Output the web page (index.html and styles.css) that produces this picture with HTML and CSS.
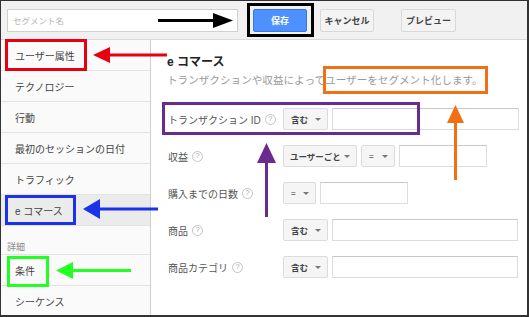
FILE: index.html
```html
<!DOCTYPE html>
<html lang="ja">
<head>
<meta charset="utf-8">
<title>セグメント</title>
<link rel="stylesheet" href="styles.css">
</head>
<body>
<div class="frame">
  <header class="topbar">
    <div class="seg-input"><span class="placeholder">セグメント名</span></div>
    <button class="btn btn-save">保存</button>
    <button class="btn btn-cancel">キャンセル</button>
    <button class="btn btn-preview">プレビュー</button>
  </header>
  <div class="main">
    <nav class="sidenav">
      <div class="nav-item">ユーザー属性</div>
      <div class="nav-item">テクノロジー</div>
      <div class="nav-item">行動</div>
      <div class="nav-item">最初のセッションの日付</div>
      <div class="nav-item">トラフィック</div>
      <div class="nav-item selected">e コマース</div>
      <div class="nav-heading">詳細</div>
      <div class="nav-item">条件</div>
      <div class="nav-item last">シーケンス</div>
    </nav>
    <section class="content">
      <h2 class="title">e コマース</h2>
      <p class="desc">トランザクションや収益によってユーザーをセグメント化します。</p>
      <div class="form">
        <div class="row">
          <div class="label">トランザクション ID <span class="help">?</span></div>
          <div class="controls">
            <div class="select w-contains"><span>含む</span><span class="caret"></span></div>
            <div class="input in-long"></div>
          </div>
        </div>
        <div class="row">
          <div class="label">収益 <span class="help">?</span></div>
          <div class="controls">
            <div class="select w-per-user"><span>ユーザーごと</span><span class="caret"></span></div>
            <div class="select w-eq"><span class="eq">=</span><span class="caret"></span></div>
            <div class="input in-short"></div>
          </div>
        </div>
        <div class="row">
          <div class="label">購入までの日数 <span class="help">?</span></div>
          <div class="controls">
            <div class="select w-eq-sm"><span class="eq">=</span><span class="caret"></span></div>
            <div class="input in-short"></div>
          </div>
        </div>
        <div class="row">
          <div class="label">商品 <span class="help">?</span></div>
          <div class="controls">
            <div class="select w-contains"><span>含む</span><span class="caret"></span></div>
            <div class="input in-long2"></div>
          </div>
        </div>
        <div class="row">
          <div class="label">商品カテゴリ <span class="help">?</span></div>
          <div class="controls">
            <div class="select w-contains"><span>含む</span><span class="caret"></span></div>
            <div class="input in-long2"></div>
          </div>
        </div>
      </div>
    </section>
  </div>
  <svg class="annotations" width="529" height="317" viewBox="0 0 529 317">
    <g fill="none" stroke-width="3">
      <rect x="6.5" y="40.5" width="79" height="29" stroke="#e60012"/>
      <rect x="248.5" y="4.5" width="64" height="31" stroke="#000"/>
      <rect x="6.5" y="196.5" width="68" height="27" stroke="#1a33e8"/>
      <rect x="8.5" y="257.5" width="39" height="28" stroke="#22ff22"/>
      <rect x="163.5" y="103.5" width="255" height="30" stroke="#6a2b8e"/>
      <rect x="324.5" y="67.5" width="162" height="25" stroke="#f07013"/>
      <line x1="158" y1="20.5" x2="215" y2="20.5" stroke="#000"/>
      <line x1="108" y1="55" x2="167" y2="55" stroke="#e60012"/>
      <line x1="98" y1="209" x2="158" y2="209" stroke="#1a33e8"/>
      <line x1="71" y1="270.5" x2="131" y2="270.5" stroke="#22ff22"/>
      <line x1="266.5" y1="160" x2="266.5" y2="217" stroke="#6a2b8e"/>
      <line x1="455.5" y1="120" x2="455.5" y2="180" stroke="#f07013"/>
    </g>
    <polygon points="213,13 233,20.5 213,28" fill="#000"/>
    <polygon points="110,47 93,55 110,63" fill="#e60012"/>
    <polygon points="100,199 83,209 100,219" fill="#1a33e8"/>
    <polygon points="73,262 56,270.5 73,279" fill="#22ff22"/>
    <polygon points="257,163 266.5,143 276,163" fill="#6a2b8e"/>
    <polygon points="447,123 455.5,105 464,123" fill="#f07013"/>
  </svg>
</div>
</body>
</html>
```

FILE: styles.css
```css
* { box-sizing: border-box; }

body {
  margin: 0;
  font-family: "Liberation Sans", "Noto Sans CJK JP", sans-serif;
  background: #fff;
}

.frame {
  position: relative;
  width: 529px;
  height: 317px;
  border-style: solid;
  border-color: #333;
  border-width: 1px 2px 2px 1px;
  overflow: hidden;
  display: flex;
  flex-direction: column;
}

.topbar {
  height: 39px;
  flex: none;
  background: #f1f1f1;
  border-bottom: 1px solid #d9d9d9;
  display: flex;
  align-items: center;
  padding-left: 6px;
}

.seg-input {
  width: 231px;
  height: 23px;
  background: #fff;
  border: 1px solid #d0d0d0;
  display: flex;
  align-items: center;
  padding-left: 5px;
}

.placeholder {
  font-size: 8.5px;
  color: #b5b5b5;
}

.btn {
  height: 23px;
  padding: 0;
  border-radius: 2px;
  font-family: inherit;
  font-size: 9px;
  font-weight: bold;
}

.btn-save {
  margin-left: 15px;
  width: 54px;
  background: #4d90fe;
  border: 1px solid #3079ed;
  color: #fff;
}

.btn-cancel {
  margin-left: 13px;
  width: 54px;
  background: #f3f3f3;
  border: 1px solid #d8d8d8;
  color: #444;
}

.btn-preview {
  margin-left: 27px;
  width: 55px;
  background: #f3f3f3;
  border: 1px solid #d8d8d8;
  color: #444;
}

.main {
  flex: 1;
  display: flex;
  min-height: 0;
}

.sidenav {
  width: 150px;
  flex: none;
  background: #fafafa;
  border-right: 1px solid #cfcfcf;
}

.nav-item {
  height: 31px;
  border-bottom: 1px solid #e3e3e3;
  padding-left: 14px;
  display: flex;
  align-items: center;
  font-size: 10px;
  color: #444;
}

.nav-item.selected {
  background: #ebebeb;
}

.nav-item.last {
  border-bottom: none;
}

.nav-heading {
  height: 29px;
  border-bottom: 1px solid #e3e3e3;
  padding-left: 6px;
  padding-bottom: 1px;
  display: flex;
  align-items: flex-end;
  font-size: 9px;
  color: #8a8a8a;
}

.content {
  flex: 1;
  padding: 14px 0 0 16px;
}

.title {
  margin: 0;
  font-size: 12px;
  line-height: 16px;
  font-weight: bold;
  color: #222;
}

.desc {
  margin: 3px 0 0;
  font-size: 10.6px;
  line-height: 14px;
  color: #9a9a9a;
  white-space: nowrap;
}

.form {
  margin-top: 21px;
  display: flex;
  flex-direction: column;
  gap: 15px;
}

.row {
  height: 22px;
  display: flex;
  align-items: center;
}

.label {
  width: 116px;
  flex: none;
  display: flex;
  align-items: center;
  gap: 4px;
  padding-left: 1px;
  font-size: 10px;
  color: #555;
  white-space: nowrap;
}

.help {
  width: 11px;
  height: 11px;
  border: 1px solid #c4c4c4;
  border-radius: 50%;
  display: flex;
  align-items: center;
  justify-content: center;
  font-size: 7.5px;
  color: #aaa;
  line-height: 1;
}

.controls {
  display: flex;
  gap: 4px;
}

.select {
  height: 22px;
  background: #f5f5f5;
  border: 1px solid #dcdcdc;
  border-radius: 2px;
  display: flex;
  align-items: center;
  justify-content: space-between;
  padding: 0 6px 0 7px;
  font-size: 8.5px;
  font-weight: bold;
  color: #444;
  white-space: nowrap;
}

.w-per-user {
  padding: 0 6px 0 6px;
}

.eq {
  font-size: 8px;
  color: #777;
}

.caret {
  width: 0;
  height: 0;
  border-left: 3px solid transparent;
  border-right: 3px solid transparent;
  border-top: 3px solid #777;
}

.input {
  height: 22px;
  background: #fff;
  border: 1px solid #dcdcdc;
  border-top-color: #c8c8c8;
}

.w-contains { width: 45px; }
.w-per-user { width: 74px; }
.w-eq { width: 34px; }
.w-eq-sm { width: 33px; }
.in-long { width: 187px; }
.in-long2 { width: 186px; }
.in-short { width: 88px; }

.annotations {
  position: absolute;
  top: -1px;
  left: -1px;
  pointer-events: none;
}
```
